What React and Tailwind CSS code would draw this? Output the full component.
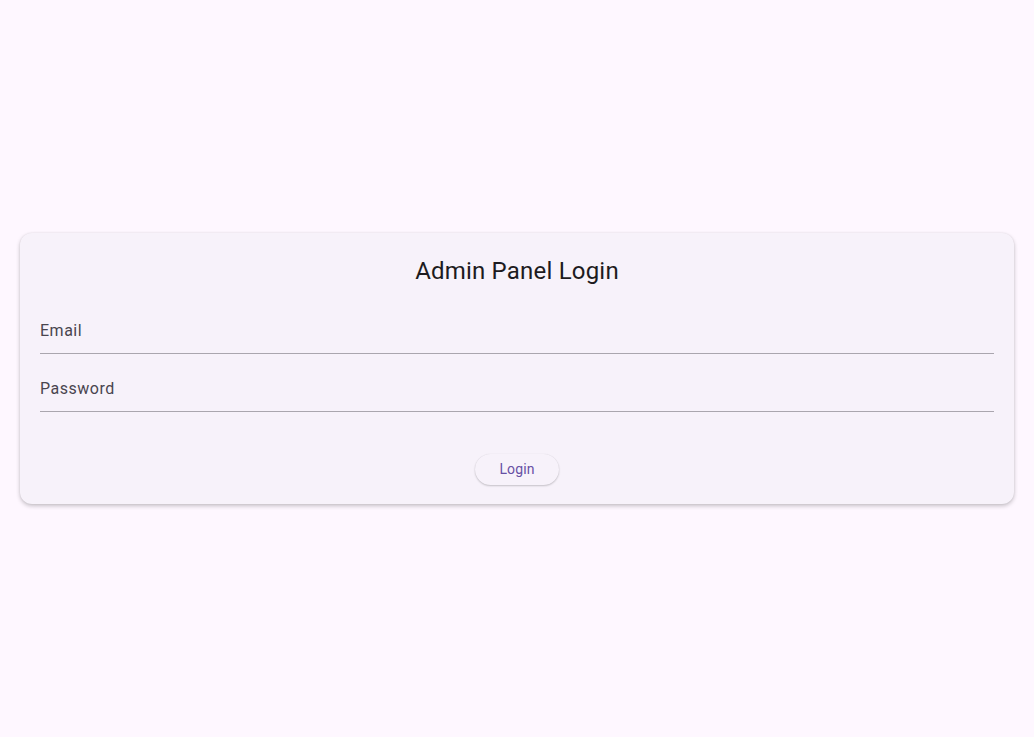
import React from 'react';

function Field({ label, height }) {
    return (
        <div className={`flex items-end pb-[10px] border-b border-[#aaa6ae] ${height}`}>
            <span className="text-[16px] leading-6 tracking-[0.5px] text-[#49454f]">{label}</span>
        </div>
    );
}

export default function App() {
    return (
        <div
            className="min-h-[737px] w-full bg-[#fef7ff] flex items-center px-5"
            style={{ fontFamily: 'Roboto, "Noto Sans", sans-serif' }}
        >
            <div className="w-full bg-[#f7f2fa] rounded-xl shadow-[0_2px_4px_rgba(0,0,0,0.22),0_0_2px_rgba(0,0,0,0.08)] px-5 pt-[22px] pb-[19px]">
                <h1 className="text-center text-[24px] leading-8 tracking-[0.2px] text-[#1d1b20]">Admin Panel Login</h1>
                <Field label="Email" height="h-[67px]" />
                <Field label="Password" height="h-[58px]" />
                <div className="flex justify-center mt-[42px]">
                    <button className="h-[31px] px-6 rounded-full bg-[#f7f2fa] text-[14px] text-[#6750a4] tracking-[0.1px] shadow-[0_1px_2px_rgba(0,0,0,0.2),0_0_1px_rgba(0,0,0,0.1)]">
                        Login
                    </button>
                </div>
            </div>
        </div>
    );
}
